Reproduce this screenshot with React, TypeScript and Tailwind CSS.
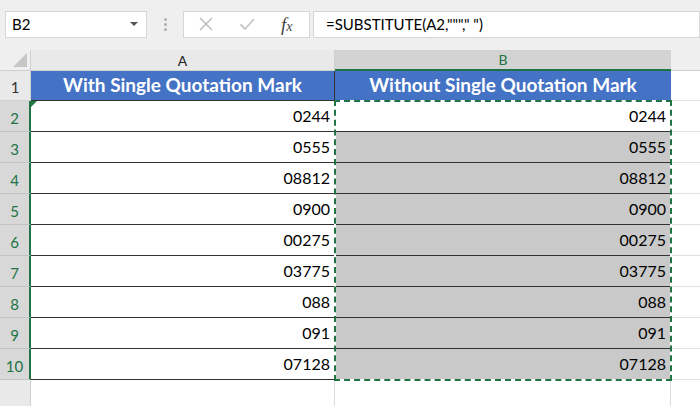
import type { FC } from 'react';

const rows = [
  { n: 2, a: '0244', b: '0244' },
  { n: 3, a: '0555', b: '0555' },
  { n: 4, a: '08812', b: '08812' },
  { n: 5, a: '0900', b: '0900' },
  { n: 6, a: '00275', b: '00275' },
  { n: 7, a: '03775', b: '03775' },
  { n: 8, a: '088', b: '088' },
  { n: 9, a: '091', b: '091' },
  { n: 10, a: '07128', b: '07128' },
];

const font = { fontFamily: 'Lato, "Open Sans", sans-serif' };

const App: FC = () => {
  return (
    <div className="w-[700px] h-[406px] overflow-hidden bg-[#efefef] text-black" style={font}>
      {/* formula bar */}
      <div className="flex items-center h-[50px] pb-[2px]">
        <div className="ml-[5px] w-[142px] h-[27px] bg-white border border-[#d6d6d6] flex items-center justify-between pl-[6px] pr-[8px]">
          <span className="text-[15px]">B2</span>
          <span className="w-0 h-0 border-l-[4px] border-r-[4px] border-t-[4px] border-l-transparent border-r-transparent border-t-[#555]" />
        </div>
        <div className="w-[36px] flex flex-col items-center gap-[2px]">
          <span className="w-[3px] h-[3px] rounded-full bg-[#b0b0b0]" />
          <span className="w-[3px] h-[3px] rounded-full bg-[#b0b0b0]" />
          <span className="w-[3px] h-[3px] rounded-full bg-[#b0b0b0]" />
        </div>
        <div className="w-[127px] h-[27px] bg-white border border-[#d6d6d6] flex items-center pl-[14px]">
          <svg width="16" height="16" viewBox="0 0 16 16" className="mr-[25px]">
            <path d="M2 2 L14 14 M14 2 L2 14" stroke="#b8b8b8" strokeWidth="1.3" fill="none" />
          </svg>
          <svg width="16" height="16" viewBox="0 0 16 16" className="mr-[26px]">
            <path d="M1.5 8.5 L6 13 L15 3" stroke="#c4c4c4" strokeWidth="1.8" fill="none" />
          </svg>
          <span className="text-[19px] italic text-[#444] leading-none" style={{ fontFamily: '"Liberation Serif", serif' }}>
            f<span className="text-[14px]">x</span>
          </span>
        </div>
        <div className="ml-[3px] flex-1 h-[27px] bg-white border border-[#d6d6d6] flex items-center pl-[12px]">
          <span className="text-[15px]">=SUBSTITUTE(A2,"""," ")</span>
        </div>
      </div>

      {/* grid */}
      <div className="relative bg-white">
        {/* column headers */}
        <div className="flex h-[21px] bg-[#efefef] text-[14px]">
          <div className="w-[31px] relative border-r border-b border-[#cfcfcf]">
            <svg width="14" height="14" viewBox="0 0 14 14" className="absolute right-[3px] bottom-[3px]">
              <path d="M14 0 L14 14 L0 14 Z" fill="#c6c6c6" />
            </svg>
          </div>
          <div className="w-[304px] flex items-center justify-center border-r border-b border-[#cfcfcf] bg-[#e9e9e9] text-[#222]">
            A
          </div>
          <div className="w-[336px] flex items-center justify-center border-b-2 border-[#217346] bg-[#d3d3d3] text-[#217346]">
            B
          </div>
          <div className="flex-1 border-b border-[#cfcfcf]" />
        </div>

        {/* row 1 */}
        <div className="flex h-[30px]">
          <div className="w-[31px] flex items-end justify-center pb-[2px] bg-[#e9e9e9] border-r border-b border-[#cfcfcf] text-[15px] text-[#333]">
            1
          </div>
          <div className="w-[304px] flex items-center justify-center bg-[#4472c4] border-r border-b border-[#333] text-white text-[19px] font-bold">
            With Single Quotation Mark
          </div>
          <div className="w-[336px] flex items-center justify-center bg-[#4472c4] border-b border-[#333] text-white text-[19px] font-bold">
            Without Single Quotation Mark
          </div>
          <div className="flex-1 border-b border-[#e1e1e1]" />
        </div>

        {rows.map((r) => (
          <div key={r.n} className="flex h-[31px]">
            <div className="w-[31px] flex items-end justify-center pb-[2px] bg-[#d8d8d8] border-r-2 border-r-[#217346] border-b border-b-[#c4c4c4] text-[15px] text-[#217346]">
              {r.n}
            </div>
            <div className="relative w-[303px] flex items-end justify-end pr-[4px] pb-[3px] border-b border-[#333] text-[16px]">
              {r.n === 2 && (
                <span className="absolute left-0 top-0 w-0 h-0 border-t-[6px] border-r-[6px] border-t-[#1e7b3c] border-r-transparent" />
              )}
              {r.a}
            </div>
            <div
              className={`w-[337px] flex items-end justify-end pr-[5px] pb-[3px] border-b border-l border-[#333] text-[16px] ${
                r.n === 2 ? 'bg-white' : 'bg-[#c9c9c9]'
              }`}
            >
              {r.b}
            </div>
            <div className="flex-1 border-b border-[#e1e1e1]" />
          </div>
        ))}

        {/* empty row below */}
        <div className="flex h-[40px]">
          <div className="w-[31px] bg-[#e9e9e9] border-r border-[#cfcfcf]" />
          <div className="w-[304px] border-r border-[#dcdcdc]" />
          <div className="w-[336px] border-r border-[#dcdcdc]" />
          <div className="flex-1" />
        </div>

        {/* copy marquee */}
        <div className="absolute left-[334px] top-[50px] w-[338px] h-[281px] border-2 border-white">
          <div className="absolute -inset-[2px] border-2 border-dashed border-[#217346]" />
        </div>
      </div>
    </div>
  );
};

export default App;
